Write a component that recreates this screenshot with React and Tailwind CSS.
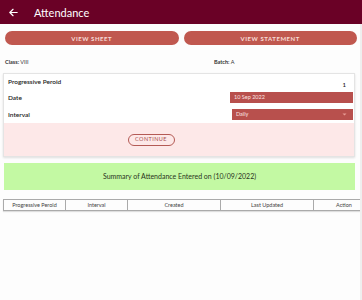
import React from "react";

export default function App() {
  return (
    <div className="w-[362px] h-[300px] bg-[#fdfdfd] overflow-hidden relative font-['Lato','Noto_Sans',sans-serif] text-[#222]">
      <div className="h-[24px] bg-[#6a0126] flex items-center">
        <svg className="ml-[8px] w-[11px] h-[11px]" viewBox="0 0 24 24" fill="none" stroke="white" strokeWidth="2.6" strokeLinecap="round" strokeLinejoin="round">
          <path d="M20 12H5" />
          <path d="M11 5l-7 7 7 7" />
        </svg>
        <span className="ml-[15px] text-[11px] text-white leading-none">Attendance</span>
      </div>

      <div className="mt-[7px] px-[5px] flex gap-[5px]">
        <div className="flex-1 h-[14px] rounded-full bg-[#c0584f] flex items-center justify-center text-[6px] font-bold tracking-[0.09em] text-[#f7dcd8]">VIEW SHEET</div>
        <div className="flex-1 h-[14px] rounded-full bg-[#c0584f] flex items-center justify-center text-[6px] font-bold tracking-[0.09em] text-[#f7dcd8]">VIEW STATEMENT</div>
      </div>

      <div className="mt-[12px] h-[10px] flex items-center text-[5.5px] text-[#333]">
        <div className="w-[214px] pl-[5px]"><span className="font-bold">Class:</span> VIII</div>
        <div><span className="font-bold">Batch:</span> A</div>
      </div>

      <div className="mt-[6px] ml-[3px] w-[352px] border border-[#e4e4e4] shadow-[0_1px_2px_rgba(0,0,0,0.12)] bg-white">
        <div className="h-[15px] flex items-start pt-[3px] px-[4px] text-[6.5px] font-semibold">
          <span className="flex-1">Progressive Peroid</span>
          <span className="mt-[3px] mr-[4px] text-[6px]">1</span>
        </div>
        <div className="h-[17px] flex items-center pl-[4px] pr-[1px] text-[6.5px] font-semibold">
          <span className="flex-1">Date</span>
          <div className="w-[123px] h-[11px] bg-[#b8504d] flex items-center pl-[4px] text-[5.5px] font-normal text-[#fbe3e0]">10 Sep 2022</div>
        </div>
        <div className="h-[17px] flex items-center pl-[4px] pr-[1px] text-[6.5px] font-semibold">
          <span className="flex-1">Interval</span>
          <div className="w-[121px] h-[11px] bg-[#b8504d] flex items-center pl-[4px] pr-[6px] text-[5.5px] font-normal text-[#fbe3e0]">
            <span className="flex-1">Daily</span>
            <svg className="w-[5px] h-[3px]" viewBox="0 0 10 6"><path d="M1 1l4 4 4-4" fill="#e79a94" /></svg>
          </div>
        </div>
        <div className="h-[33px] bg-[#fde8e8] flex items-center justify-center">
          <div className="ml-[-56px] w-[47px] h-[12px] rounded-full border border-[#b45a55] flex items-center justify-center text-[5.5px] tracking-[0.08em] text-[#a8524e]">CONTINUE</div>
        </div>
      </div>

      <div className="mt-[6px] ml-[4px] w-[351px] h-[27px] bg-[#c3f9a3] flex items-center justify-center text-[7px] text-[#2a3320]">
        Summary of Attendance Entered on (10/09/2022)
      </div>

      <div className="mt-[9px] ml-[3px] flex h-[12px] text-[5.5px] text-[#444] border border-[#aaa] w-[380px] shadow-[0_1px_1px_rgba(0,0,0,0.12)]">
        <div className="w-[62px] border-r border-[#aaa] flex items-center justify-center">Progressive Peroid</div>
        <div className="w-[62px] border-r border-[#aaa] flex items-center justify-center">Interval</div>
        <div className="w-[93px] border-r border-[#aaa] flex items-center justify-center">Created</div>
        <div className="w-[93px] border-r border-[#aaa] flex items-center justify-center">Last Updated</div>
        <div className="w-[60px] flex items-center justify-center">Action</div>
      </div>

      <div className="absolute right-0 top-[24px] bottom-0 w-[2px] bg-[#efefef]" />
    </div>
  );
}
